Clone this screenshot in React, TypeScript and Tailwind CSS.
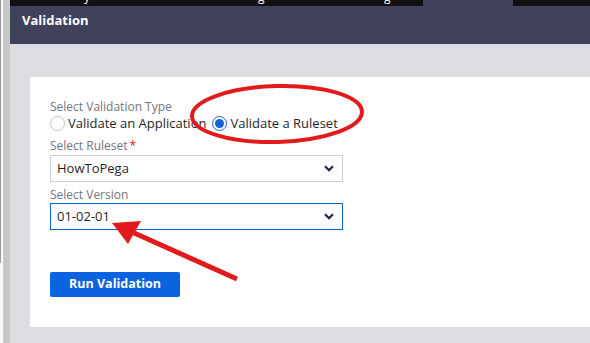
import React, { useState } from "react";

const Chevron = () => (
  <svg width="10" height="7" viewBox="0 0 10 7" className="shrink-0">
    <path d="M1 1.2 L5 5.2 L9 1.2" fill="none" stroke="#1f2040" strokeWidth="2.2" />
  </svg>
);

const Radio = ({ checked, label, onClick }: { checked: boolean; label: string; onClick: () => void }) => (
  <button onClick={onClick} className="flex items-center gap-[3px] text-[13px] text-[#1f1f2e] leading-[16px]">
    <span
      className={`flex items-center justify-center w-[15px] h-[15px] rounded-full border bg-white ${
        checked ? "border-[#1560d8]" : "border-[#c4c4c4]"
      }`}
    >
      {checked && <span className="w-[9px] h-[9px] rounded-full bg-[#1560d8]" />}
    </span>
    {label}
  </button>
);

export default function App() {
  const [type, setType] = useState<"app" | "ruleset">("ruleset");

  return (
    <div
      className="relative flex w-[590px] h-[343px] overflow-hidden bg-[#dcdde1]"
      style={{ fontFamily: '"Open Sans", "Noto Sans", sans-serif' }}
    >
      {/* left edge strip */}
      <div className="flex w-[10px] shrink-0">
        <div className="w-[3px] bg-[#fafafa] flex">
          <div className="w-[1px] h-[263px] bg-[#9a9a9a]" />
        </div>
        <div className="w-[7px] bg-[#c8c8c8]" />
      </div>

      <div className="flex-1 flex flex-col">
        {/* top tab bar (cut off at the screenshot edge) */}
        <div className="flex h-[6px] overflow-hidden">
          <div className="w-[413px] bg-[#111111] relative overflow-hidden text-white text-[12px] leading-[14px]">
            <span className="absolute left-[74px] top-[-10px]">y</span>
            <span className="absolute left-[248px] top-[-10px]">g</span>
            <span className="absolute left-[374px] top-[-10px]">g</span>
          </div>
          <div className="w-[90px] bg-[#40415a]" />
          <div className="flex-1 bg-[#111111]" />
        </div>

        {/* header */}
        <div className="h-[38px] bg-[#40415a] flex items-center px-[12px]">
          <h1 className="text-white text-[13px] font-bold -mt-[9px]">Validation</h1>
        </div>

        {/* content */}
        <div className="pl-[20px] pt-[33px]">
          <div className="bg-white h-[250px] pl-[20px] pt-[23px]">
            <div className="text-[12px] leading-[14px] text-[#74747c]">Select Validation Type</div>
            <div className="flex items-center gap-[6px] mt-[1px]">
              <Radio checked={type === "app"} label="Validate an Application" onClick={() => setType("app")} />
              <Radio checked={type === "ruleset"} label="Validate a Ruleset" onClick={() => setType("ruleset")} />
            </div>

            <div className="mt-[8px] text-[12px] leading-[14px] text-[#74747c]">
              Select Ruleset<span className="text-[#d11] ml-[2px]">*</span>
            </div>
            <div className="mt-[2px] w-[293px] h-[27px] border border-[#cfcfcf] flex items-center justify-between pl-[6px] pr-[8px] text-[13px] text-[#1f1f2e]">
              <span>HowToPega</span>
              <Chevron />
            </div>

            <div className="mt-[6px] text-[12px] leading-[14px] text-[#74747c]">Select Version</div>
            <div className="mt-[1px] w-[293px] h-[27px] border border-[#0e62d8] flex items-center justify-between pl-[6px] pr-[8px] text-[13px] text-[#1f1f2e]">
              <span>01-02-01</span>
              <Chevron />
            </div>

            <button className="mt-[42px] w-[130px] h-[25px] rounded-[2px] bg-[#0b63e0] text-white text-[12.5px] font-bold">
              Run Validation
            </button>
          </div>
        </div>
      </div>

      {/* annotations */}
      <svg className="absolute inset-0 pointer-events-none" width="590" height="343">
        <ellipse
          cx="277"
          cy="114"
          rx="85"
          ry="28"
          fill="none"
          stroke="#e11b1b"
          strokeWidth="4"
          transform="rotate(-1.5 277 114)"
        />
        <line x1="237" y1="279" x2="132" y2="232" stroke="#e11b1b" strokeWidth="5" />
        <polygon points="112,223 141,221 128,244" fill="#e11b1b" />
      </svg>
    </div>
  );
}
